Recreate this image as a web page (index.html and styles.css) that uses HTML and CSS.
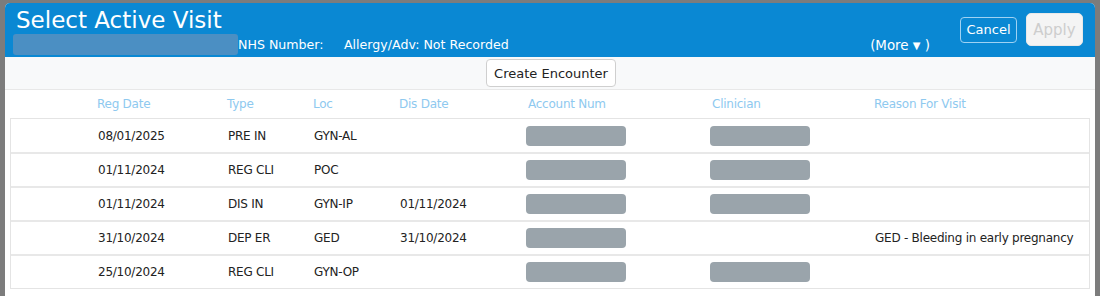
FILE: index.html
```html
<!DOCTYPE html>
<html>
<head>
<meta charset="utf-8">
<link rel="stylesheet" href="styles.css">
</head>
<body>
<div class="dialog">
  <div class="header">
    <div class="head-left">
      <div class="title">Select Active Visit</div>
      <div class="info">
        <span class="blur-name"></span>
        <span class="nhs">NHS Number:</span>
        <span class="allergy">Allergy/Adv: Not Recorded</span>
      </div>
    </div>
    <div class="more">(More <span class="caret">&#9660;</span> )</div>
    <div class="actions">
      <button class="btn-cancel">Cancel</button>
      <button class="btn-apply">Apply</button>
    </div>
  </div>
  <div class="toolbar">
    <button class="btn-create">Create Encounter</button>
  </div>
  <div class="table">
    <div class="grid head">
      <div></div><div>Reg Date</div><div>Type</div><div>Loc</div><div>Dis Date</div><div class="hc">Account Num</div><div class="hc">Clinician</div><div>Reason For Visit</div>
    </div>
    <div class="rows">
      <div class="grid row">
        <div></div><div>08/01/2025</div><div>PRE IN</div><div>GYN-AL</div><div></div><div><span class="pill"></span></div><div><span class="pill"></span></div><div></div>
      </div>
      <div class="grid row">
        <div></div><div>01/11/2024</div><div>REG CLI</div><div>POC</div><div></div><div><span class="pill"></span></div><div><span class="pill"></span></div><div></div>
      </div>
      <div class="grid row">
        <div></div><div>01/11/2024</div><div>DIS IN</div><div>GYN-IP</div><div>01/11/2024</div><div><span class="pill"></span></div><div><span class="pill"></span></div><div></div>
      </div>
      <div class="grid row">
        <div></div><div>31/10/2024</div><div>DEP ER</div><div>GED</div><div>31/10/2024</div><div><span class="pill"></span></div><div></div><div>GED - Bleeding in early pregnancy</div>
      </div>
      <div class="grid row">
        <div></div><div>25/10/2024</div><div>REG CLI</div><div>GYN-OP</div><div></div><div><span class="pill"></span></div><div><span class="pill"></span></div><div></div>
      </div>
    </div>
  </div>
</div>
</body>
</html>
```
FILE: styles.css
```css
html, body {
  margin: 0;
  padding: 0;
  background: #7c7c7c;
  height: 296px;
  overflow: hidden;
}
body {
  font-family: "DejaVu Sans", Verdana, sans-serif;
  font-size: 12px;
  color: #222;
}
.dialog {
  margin: 3px 5px 0 5px;
  height: 293px;
  background: #fff;
  border-radius: 5px 5px 0 0;
  overflow: hidden;
}
.header {
  background: #0a88d3;
  height: 54px;
  display: flex;
  align-items: flex-start;
  color: #fff;
}
.head-left {
  flex: 1;
  padding-left: 8px;
}
.title {
  font-size: 23px;
  line-height: 28px;
  padding-top: 3px;
  padding-left: 3px;
}
.info {
  display: flex;
  align-items: center;
  height: 21px;
  font-size: 12.6px;
}
.blur-name {
  width: 225px;
  height: 21px;
  background: #4b8fc3;
  border-radius: 3px;
}
.nhs {
  width: 106px;
}
.more {
  font-size: 13.4px;
  margin-top: 32px;
  margin-right: 30px;
  height: 21px;
  line-height: 21px;
}
.caret {
  font-size: 10px;
  vertical-align: 1px;
}
.actions {
  display: flex;
  align-items: center;
  gap: 9px;
  margin-top: 10px;
  margin-right: 12px;
}
button {
  font-family: inherit;
  cursor: pointer;
}
.btn-cancel {
  background: transparent;
  color: #fff;
  border: 1px solid #9fd2f3;
  border-radius: 4px;
  font-size: 13px;
  height: 26px;
  width: 57px;
  padding: 0;
}
.btn-apply {
  background: #f4f4f4;
  color: #cdcdcd;
  border: 1px solid #e8e8e8;
  border-radius: 5px;
  font-size: 15px;
  height: 33px;
  width: 57px;
  padding: 0;
}
.toolbar {
  height: 32px;
  background: #f8f9fa;
  border-bottom: 1px solid #e8e8e8;
  display: flex;
  justify-content: center;
  align-items: center;
}
.btn-create {
  background: #fff;
  border: 1px solid #cfcfcf;
  border-radius: 4px;
  height: 28px;
  font-size: 13px;
  color: #222;
  padding: 0 7px;
  margin-left: 2px;
}
.table {
  padding: 0 5px;
  letter-spacing: -0.25px;
}
.grid {
  display: grid;
  grid-template-columns: 87px 130px 86px 86px 127px 184px 164px 1fr;
  align-items: center;
}
.head {
  height: 28px;
  color: #8ec9ef;
  font-size: 12px;
}
.hc {
  padding-left: 2px;
}
.rows {
  border-left: 1px solid #e4e4e4;
  border-right: 1px solid #e4e4e4;
  border-bottom: 1px solid #e4e4e4;
}
.row {
  box-sizing: border-box;
  height: 34px;
  border-top: 2px solid #e8e8e8;
}
.row:first-child {
  border-top: 1px solid #e4e4e4;
}
.pill {
  display: block;
  width: 100px;
  height: 20px;
  margin-left: -1px;
  background: #9aa4ab;
  border-radius: 4px;
}
```
